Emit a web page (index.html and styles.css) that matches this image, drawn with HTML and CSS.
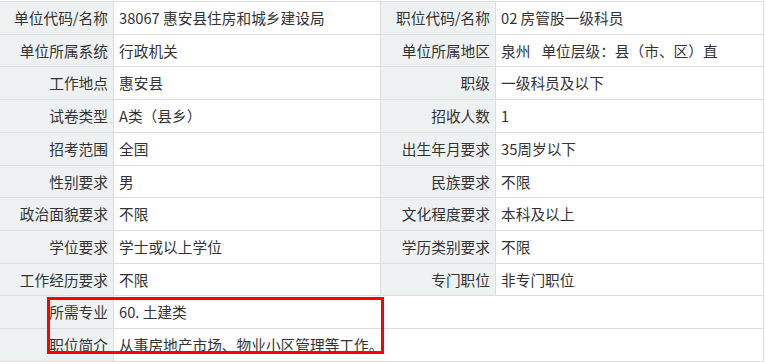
FILE: index.html
```html
<!DOCTYPE html>
<html lang="zh-CN">
<head>
<meta charset="utf-8">
<link rel="stylesheet" href="styles.css">
</head>
<body>
<div class="wrap">
<table class="info">
<colgroup><col class="c1"><col class="c2"><col class="c3"><col class="c4"></colgroup>
<tbody>
<tr><th>单位代码/名称</th><td>38067 惠安县住房和城乡建设局</td><th>职位代码/名称</th><td>02 房管股一级科员</td></tr>
<tr><th>单位所属系统</th><td>行政机关</td><th>单位所属地区</th><td>泉州<span class="gap"></span>单位层级：县（市、区）直</td></tr>
<tr><th>工作地点</th><td>惠安县</td><th>职级</th><td>一级科员及以下</td></tr>
<tr><th>试卷类型</th><td>A类（县乡）</td><th>招收人数</th><td>1</td></tr>
<tr><th>招考范围</th><td>全国</td><th>出生年月要求</th><td>35周岁以下</td></tr>
<tr><th>性别要求</th><td>男</td><th>民族要求</th><td>不限</td></tr>
<tr><th>政治面貌要求</th><td>不限</td><th>文化程度要求</th><td>本科及以上</td></tr>
<tr><th>学位要求</th><td>学士或以上学位</td><th>学历类别要求</th><td>不限</td></tr>
<tr><th>工作经历要求</th><td>不限</td><th>专门职位</th><td>非专门职位</td></tr>
<tr><th>所需专业</th><td colspan="3">60. 土建类</td></tr>
<tr><th>职位简介</th><td colspan="3">从事房地产市场、物业小区管理等工作。</td></tr>
<tr><th>&nbsp;</th><td colspan="3">&nbsp;</td></tr>
</tbody>
</table>
<div class="highlight"></div>
</div>
</body>
</html>
```
FILE: styles.css
```css
html, body {
  margin: 0;
  padding: 0;
  background: #fff;
}
.wrap {
  position: relative;
  padding-top: 1px;
  margin-left: -1px;
  width: 764px;
}
.info {
  border-collapse: collapse;
  table-layout: fixed;
  width: 764px;
  font-family: "Noto Sans CJK SC", "Microsoft YaHei", sans-serif;
  font-size: 14.7px;
  color: #333;
}
.c1 { width: 114px; }
.c2 { width: 267px; }
.c3 { width: 115px; }
.c4 { width: 268px; }
.info th, .info td {
  border: 1px solid #dddddd;
  padding: 6px 5px;
  line-height: 19.7px;
  height: 19.7px;
  white-space: nowrap;
  overflow: hidden;
}
.info th {
  background: #eef1f1;
  font-weight: normal;
  text-align: right;
}
.info td {
  background: #fff;
  text-align: left;
}
.gap {
  display: inline-block;
  width: 11px;
}
.highlight {
  position: absolute;
  left: 48px;
  top: 297px;
  width: 331px;
  height: 51px;
  border: 3px solid #ff0000;
  pointer-events: none;
}
```
